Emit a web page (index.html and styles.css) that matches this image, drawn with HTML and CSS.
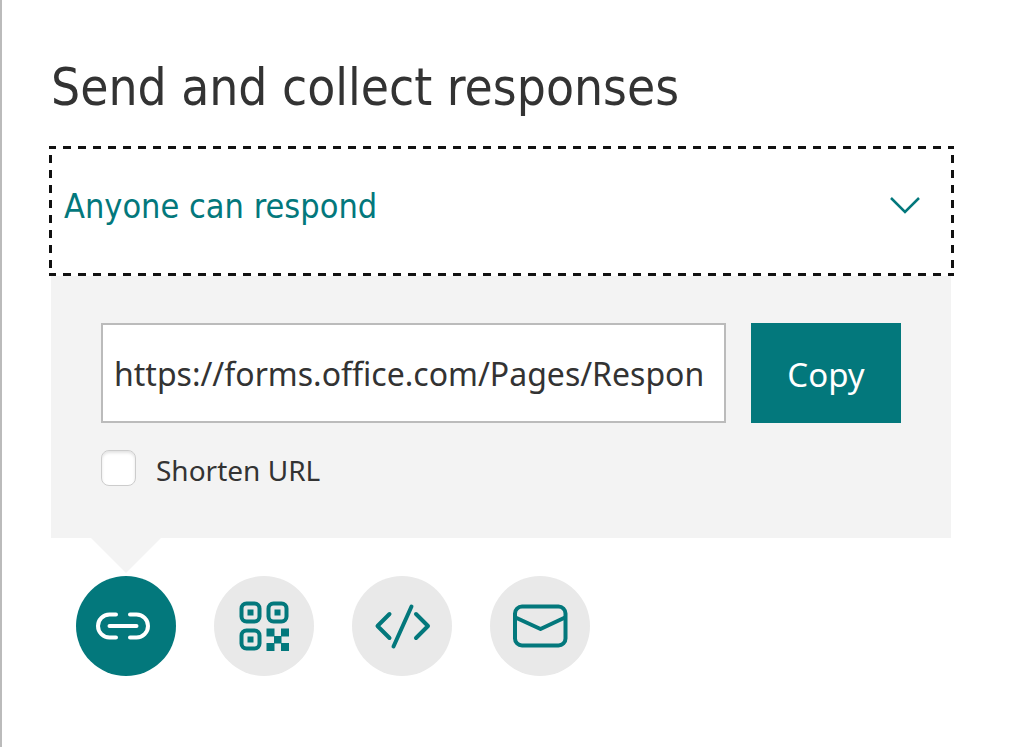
FILE: index.html
```html
<!DOCTYPE html>
<html lang="en">
<head>
<meta charset="utf-8">
<title>Send and collect responses</title>
<link rel="stylesheet" href="styles.css">
</head>
<body>
<main class="pane">
  <h1 class="title">Send and collect responses</h1>
  <button class="audience" type="button" aria-haspopup="listbox">
    <span>Anyone can respond</span>
    <svg class="chevron" viewBox="0 0 32 18" aria-hidden="true"><path d="M2 1 16 15 30 1"/></svg>
  </button>
  <section class="panel" aria-label="Share link">
    <div class="link-row">
      <input class="url" type="text" aria-label="Form link" value="https://forms.office.com/Pages/Respon" readonly>
      <button class="copy" type="button">Copy</button>
    </div>
    <div class="shorten">
      <input class="check" type="checkbox" id="shorten">
      <label class="check-label" for="shorten">Shorten URL</label>
    </div>
  </section>
  <div class="methods">
    <button class="method method-active" type="button" aria-label="Link">
      <svg viewBox="0 0 100 100" aria-hidden="true"><path d="M40 38.500H33.500a11.500 11.500 0 0 0 0 23H40M54 38.500h6.500a11.500 11.500 0 0 1 0 23H54M33.500 50H60.500"/></svg>
    </button>
    <button class="method" type="button" aria-label="QR code">
      <svg viewBox="0 0 100 100" aria-hidden="true">
        <rect x="27.500" y="27.500" width="18" height="18" rx="5"/>
        <rect x="54.500" y="27.500" width="18" height="18" rx="5"/>
        <rect x="27.500" y="54.500" width="18" height="18" rx="5"/>
        <path class="solid" d="M33.500 33.500h6v6h-6zM60.500 33.500h6v6h-6zM33.500 60.500h6v6h-6zM52.500 52.500h8v8h-8zM67 52.500h8v8h-8zM60 60h7.500v7.500H60zM52.500 67h8v8h-8zM67 67h8v8h-8z"/>
      </svg>
    </button>
    <button class="method" type="button" aria-label="Embed">
      <svg viewBox="0 0 100 100" aria-hidden="true"><path d="M37.500 38 25.500 50 37.500 62M64 38 76 50 64 62M59.500 30.500 41.500 70.500"/></svg>
    </button>
    <button class="method" type="button" aria-label="Email">
      <svg viewBox="0 0 100 100" aria-hidden="true"><rect x="25" y="30.500" width="50.500" height="39" rx="7"/><path d="M25.500 41.500 50.500 53 75 41.500"/></svg>
    </button>
  </div>
</main>
</body>
</html>
```
FILE: styles.css
```css
* { box-sizing: border-box; }

body {
  margin: 0;
  background: #fff;
  color: #333;
  font-family: "Noto Sans", "Open Sans", sans-serif;
}

.pane {
  min-height: 100vh;
  padding: 56px 55px 0 47px;
  border-left: 2px solid #bbb;
}

.title {
  margin: 0 2px;
  font: 400 51px/64px "DejaVu Sans Condensed", "DejaVu Sans", sans-serif;
}

button {
  border: 0;
  cursor: pointer;
}

.audience {
  --dash: #111 0 8px, transparent 8px 15px;
  display: flex;
  align-items: center;
  justify-content: space-between;
  width: 100%;
  height: 130px;
  margin-top: 26px;
  padding: 0 33px 10px 15px;
  background:
    repeating-linear-gradient(90deg, var(--dash)) -1px 0 / 120% 3px repeat-x,
    repeating-linear-gradient(90deg, var(--dash)) -1px 100% / 120% 3px repeat-x,
    repeating-linear-gradient(180deg, var(--dash)) 0 -6px / 3px 150px repeat-y,
    repeating-linear-gradient(180deg, var(--dash)) 100% -6px / 3px 150px repeat-y;
  background-position: -1px 0, -1px 100%, 0 -6px, 100% -6px;
  color: #03787c;
  font: 400 34px/44px "DejaVu Sans Condensed", "DejaVu Sans", sans-serif;
}

.chevron {
  width: 32px;
  height: 18px;
  fill: none;
  stroke: currentColor;
  stroke-width: 2.500;
}

.panel {
  position: relative;
  margin: 0 3px 0 2px;
  padding: 47px 50px 52px;
  background: #f3f3f3;
}

.panel::after {
  content: "";
  position: absolute;
  top: 100%;
  left: 40px;
  width: 70px;
  height: 35px;
  background: #f3f3f3;
  clip-path: polygon(0 0, 100% 0, 50% 100%);
}

.link-row {
  display: flex;
  gap: 25px;
}

.url {
  flex: 1;
  min-width: 0;
  height: 100px;
  padding: 0 10px 0 11px;
  border: 2px solid #bbb;
  border-radius: 0;
  background: #fff;
  color: #333;
  font: 400 32px/44px "Noto Sans", sans-serif;
}

.copy {
  width: 150px;
  height: 100px;
  padding: 4px 0 0;
  background: #03787c;
  color: #fff;
  font: 400 33px/44px "Noto Sans", sans-serif;
}

.shorten {
  display: flex;
  align-items: center;
  gap: 20px;
  margin-top: 27px;
}

.check {
  appearance: none;
  width: 35px;
  height: 36px;
  margin: 0;
  border: 1px solid #ccc;
  border-radius: 8px;
  background: #fff;
  box-shadow: inset 0 2px 3px #e3e3e3;
}

.check-label {
  padding-top: 4px;
  font-size: 28px;
  line-height: 32px;
}

.methods {
  display: flex;
  gap: 38px;
  padding: 38px 27px 0;
}

.method {
  width: 100px;
  height: 100px;
  padding: 0;
  border-radius: 50%;
  background: #e9e9e9;
  color: #03787c;
}

.method-active {
  background: #03787c;
  color: #fff;
}

.method svg {
  display: block;
  width: 100%;
  height: 100%;
  fill: none;
  stroke: currentColor;
  stroke-width: 4;
  stroke-linecap: round;
  stroke-linejoin: round;
}

.method .solid {
  fill: currentColor;
  stroke: none;
}
```
